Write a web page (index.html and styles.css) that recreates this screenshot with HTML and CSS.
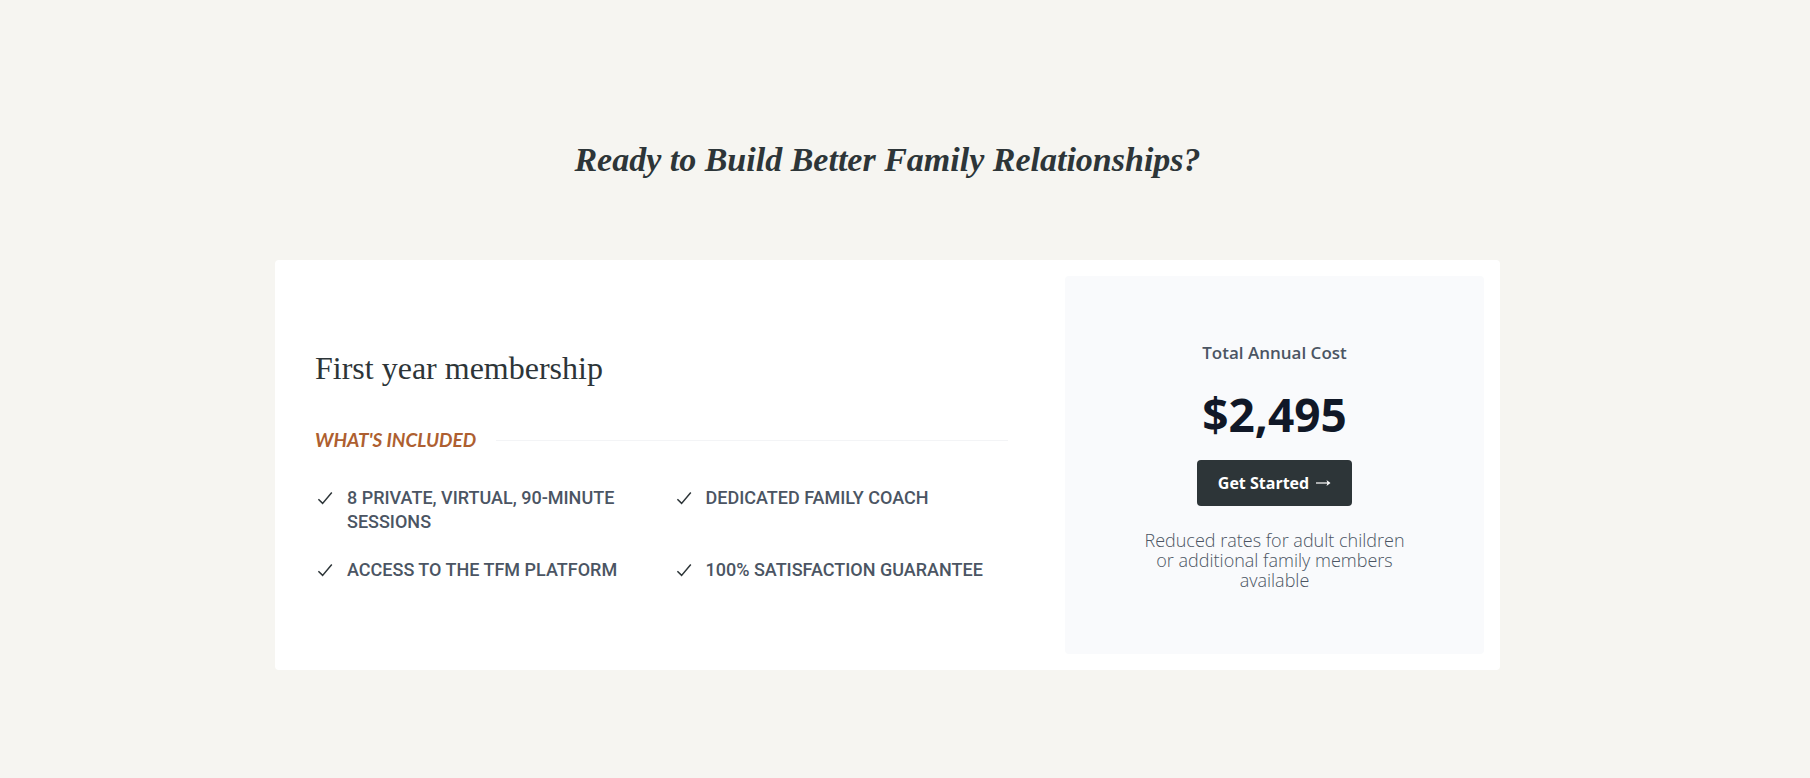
FILE: index.html
```html
<!DOCTYPE html>
<html lang="en">
<head>
<meta charset="utf-8">
<meta name="viewport" content="width=device-width, initial-scale=1">
<title>Membership pricing</title>
<link rel="stylesheet" href="styles.css">
</head>
<body>
<main class="pricing">
  <h2 class="pricing-title">Ready to Build Better Family Relationships?</h2>
  <section class="card">
    <div class="details">
      <h3 class="plan">First year membership</h3>
      <div class="included">
        <h4 class="included-label">WHAT'S INCLUDED</h4>
        <div class="rule"></div>
      </div>
      <ul class="features">
        <li class="feature"><svg class="check" viewBox="0 0 20 20" aria-hidden="true"><path d="M3.4 11.2 7.6 15.4 16.8 4.6"/></svg><span>8 PRIVATE, VIRTUAL, 90-MINUTE SESSIONS</span></li>
        <li class="feature"><svg class="check" viewBox="0 0 20 20" aria-hidden="true"><path d="M3.4 11.2 7.6 15.4 16.8 4.6"/></svg><span>DEDICATED FAMILY COACH</span></li>
        <li class="feature"><svg class="check" viewBox="0 0 20 20" aria-hidden="true"><path d="M3.4 11.2 7.6 15.4 16.8 4.6"/></svg><span>ACCESS TO THE TFM PLATFORM</span></li>
        <li class="feature"><svg class="check" viewBox="0 0 20 20" aria-hidden="true"><path d="M3.4 11.2 7.6 15.4 16.8 4.6"/></svg><span>100% SATISFACTION GUARANTEE</span></li>
      </ul>
    </div>
    <div class="cost">
      <p class="cost-label">Total Annual Cost</p>
      <p class="price">$2,495</p>
      <a class="cta" href="#">Get Started <svg class="arrow" viewBox="0 0 16 10" aria-hidden="true"><path d="M1 5H14"/><path class="arrow-head" d="M11.5 2 15.5 5 11.5 8 12.5 5Z"/></svg></a>
      <p class="note">Reduced rates for adult children or additional family members available</p>
    </div>
  </section>
</main>
</body>
</html>
```
FILE: styles.css
```css
* { box-sizing: border-box; }
body {
  margin: 0;
  background: #f6f5f1;
  color: #2d3538;
  font-family: "Open Sans", "Noto Sans", sans-serif;
}
h2, h3, h4, p, ul { margin: 0; padding: 0; }
.pricing {
  padding: 140px 35px 108px 0;
}
.pricing-title {
  margin-bottom: 80px;
  font: italic 700 34px/40px "Liberation Serif", serif;
  text-align: center;
}
.card {
  display: flex;
  max-width: 1225px;
  margin: 0 auto;
  padding: 16px;
  background: #fff;
  border-radius: 4px;
}
.details {
  flex: 1;
  display: flex;
  flex-direction: column;
  justify-content: center;
  padding: 0 57px 0 24px;
}
.plan {
  font: 400 32px/40px "Liberation Serif", serif;
}
.included {
  display: flex;
  align-items: center;
  gap: 20px;
  margin: 40px 0 34px;
}
.included-label {
  color: #ae5f30;
  font: italic 700 19px/24px "Lato", sans-serif;
}
.rule {
  flex: 1;
  height: 1px;
  background: #f3f4f6;
}
.features {
  display: grid;
  grid-template-columns: 1fr 1fr;
  gap: 24px;
  list-style: none;
}
.feature {
  display: flex;
  gap: 12px;
  color: #4b5563;
  font: 500 18px/24px "Roboto", sans-serif;
}
.check {
  flex: none;
  width: 20px;
  height: 20px;
  margin-top: 2px;
  fill: none;
  stroke: #2d3538;
  stroke-width: 1.5;
}
.cost {
  display: flex;
  flex-direction: column;
  align-items: center;
  width: 419px;
  padding: 63px 72px 64px;
  border-radius: 4px;
  background: #f9fafc;
  color: #4b5563;
  text-align: center;
}
.cost-label { font-size: 17px; line-height: 28px; font-weight: 600; }
.price {
  margin: 23px 0 22px;
  color: #111827;
  font-size: 46px;
  line-height: 48px;
  font-weight: 700;
}
.cta {
  display: flex;
  align-items: center;
  gap: 6px;
  padding: 11px 21px;
  border-radius: 4px;
  background: #2d3538;
  color: #fff;
  font-size: 16px;
  line-height: 24px;
  font-weight: 700;
  text-decoration: none;
}
.arrow {
  width: 16px;
  height: 10px;
  fill: none;
  stroke: #fff;
  stroke-width: 1.2;
}
.arrow-head {
  fill: #fff;
  stroke: none;
}
.note {
  margin-top: 24px;
  font-size: 18px;
  line-height: 20px;
  font-weight: 300;
}
```
